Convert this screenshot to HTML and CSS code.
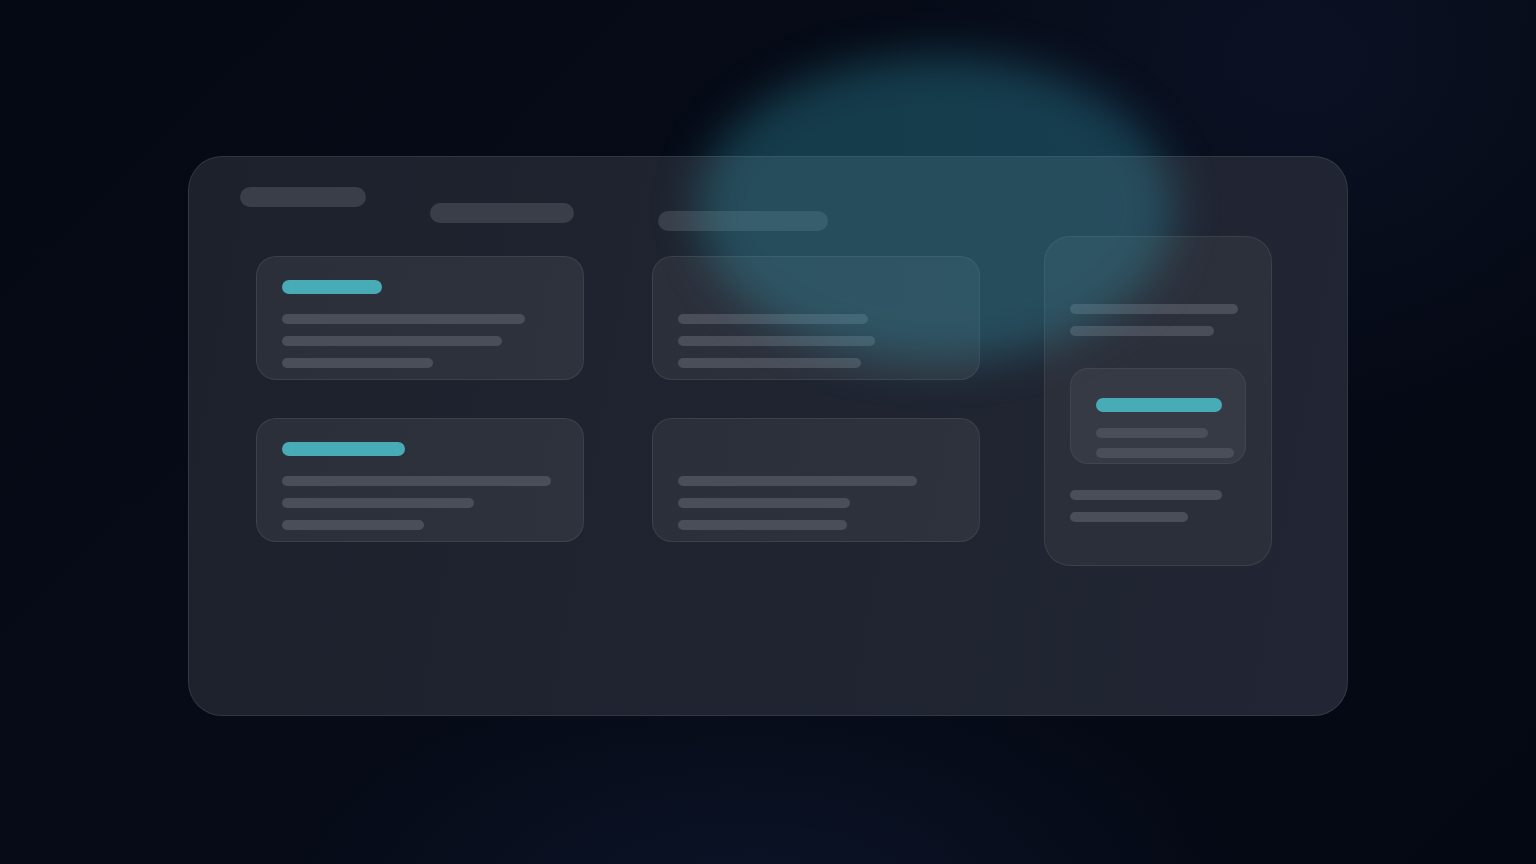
FILE: index.html
```html
<!DOCTYPE html>
<html lang="en">
<head>
<meta charset="utf-8">
<title>Skeleton dashboard</title>
<link rel="stylesheet" href="styles.css">
</head>
<body>
<div class="stage">
  <div class="panel">
    <div class="header">
      <div class="hbar hbar-1"></div>
      <div class="hbar hbar-2"></div>
      <div class="hbar hbar-3"></div>
    </div>
    <div class="main">
      <div class="grid">
        <div class="card">
          <div class="accent" style="width:100px"></div>
          <div class="lines">
            <div class="line" style="width:243px"></div>
            <div class="line" style="width:220px"></div>
            <div class="line" style="width:151px"></div>
          </div>
        </div>
        <div class="card">
          <div class="accent accent-empty"></div>
          <div class="lines">
            <div class="line" style="width:190px"></div>
            <div class="line" style="width:197px"></div>
            <div class="line" style="width:183px"></div>
          </div>
        </div>
        <div class="card">
          <div class="accent" style="width:123px"></div>
          <div class="lines">
            <div class="line" style="width:269px"></div>
            <div class="line" style="width:192px"></div>
            <div class="line" style="width:142px"></div>
          </div>
        </div>
        <div class="card">
          <div class="accent accent-empty"></div>
          <div class="lines">
            <div class="line" style="width:239px"></div>
            <div class="line" style="width:172px"></div>
            <div class="line" style="width:169px"></div>
          </div>
        </div>
      </div>
      <div class="side">
        <div class="lines">
          <div class="line" style="width:168px"></div>
          <div class="line" style="width:144px"></div>
        </div>
        <div class="inner">
          <div class="accent" style="width:126px"></div>
          <div class="inner-lines">
            <div class="line" style="width:112px"></div>
            <div class="line" style="width:138px"></div>
          </div>
        </div>
        <div class="lines side-bottom">
          <div class="line" style="width:152px"></div>
          <div class="line" style="width:118px"></div>
        </div>
      </div>
    </div>
  </div>
  <div class="glow"></div>
</div>
</body>
</html>
```

FILE: styles.css
```css
* { box-sizing: border-box; }

html, body {
  margin: 0;
  height: 100%;
}

body {
  font-family: "Inter", "Liberation Sans", sans-serif;
  background:
    radial-gradient(ellipse 700px 380px at 760px 920px, rgba(22, 36, 70, 0.4), rgba(22, 36, 70, 0) 70%),
    radial-gradient(ellipse 600px 500px at 1300px 60px, rgba(20, 28, 56, 0.4), rgba(20, 28, 56, 0) 70%),
    linear-gradient(135deg, #050914 0%, #060b17 45%, #040813 100%);
  overflow: hidden;
}

.stage {
  position: relative;
  width: 1536px;
  height: 864px;
  padding-top: 156px;
}

.panel {
  width: 1160px;
  height: 560px;
  margin: 0 auto;
  border-radius: 34px;
  border: 1px solid rgba(255, 255, 255, 0.09);
  background: linear-gradient(100deg, #1d212c 0%, #1f2430 50%, #222634 100%);
  padding: 30px 51px;
}

.header {
  display: flex;
  align-items: flex-start;
  height: 44px;
}

.hbar {
  height: 20px;
  border-radius: 10px;
  background: #3a3e49;
}

.hbar-1 { width: 126px; }
.hbar-2 { width: 144px; margin-left: 64px; margin-top: 16px; }
.hbar-3 { width: 170px; margin-left: 84px; margin-top: 24px; }

.main {
  display: flex;
  align-items: flex-start;
  gap: 64px;
  margin-top: 5px;
  padding-left: 16px;
}

.grid {
  display: grid;
  grid-template-columns: 328px 328px;
  column-gap: 68px;
  row-gap: 38px;
  padding-top: 20px;
}

.card {
  height: 124px;
  border-radius: 20px;
  border: 1px solid rgba(255, 255, 255, 0.08);
  background: linear-gradient(100deg, #2b2f3a 0%, #2e323d 100%);
  padding: 23px 25px 0;
}

.accent {
  height: 14px;
  border-radius: 7px;
  background: #48acb6;
}

.accent-empty {
  visibility: hidden;
}

.lines {
  display: flex;
  flex-direction: column;
  gap: 12px;
  margin-top: 20px;
}

.line {
  height: 10px;
  border-radius: 5px;
  background: #4a4e59;
}

.side {
  width: 228px;
  height: 330px;
  border-radius: 26px;
  border: 1px solid rgba(255, 255, 255, 0.08);
  background: linear-gradient(180deg, #2c303b 0%, #2b2f3a 100%);
  padding: 67px 25px 0;
}

.side .lines {
  margin-top: 0;
}

.inner {
  width: 176px;
  height: 96px;
  margin-top: 32px;
  border-radius: 18px;
  border: 1px solid rgba(255, 255, 255, 0.06);
  background: #363a45;
  padding: 29px 11px 0 25px;
}

.inner-lines {
  display: flex;
  flex-direction: column;
  gap: 10px;
  margin-top: 16px;
}

.side .side-bottom {
  margin-top: 26px;
}

.glow {
  position: absolute;
  left: 698px;
  top: 56px;
  width: 476px;
  height: 306px;
  border-radius: 50%;
  background: rgba(52, 160, 182, 0.33);
  filter: blur(22px);
  pointer-events: none;
}
```
